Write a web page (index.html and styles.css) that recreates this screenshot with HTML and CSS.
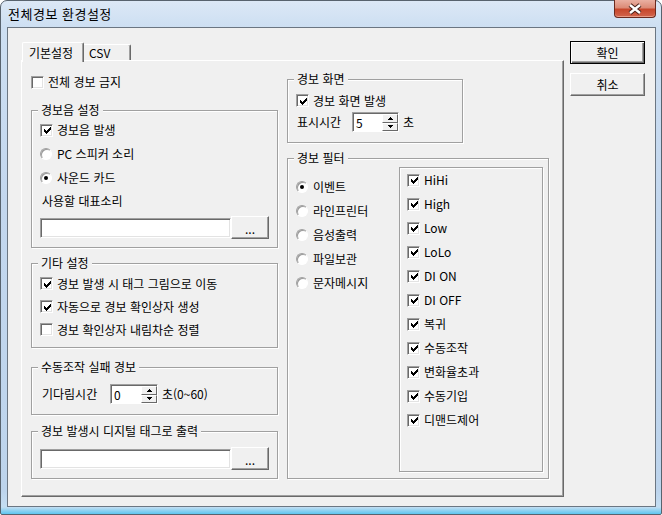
FILE: index.html
```html
<!DOCTYPE html>
<html lang="ko">
<head>
    <meta charset="UTF-8">
    <title>전체경보 환경설정</title>
    <link rel="stylesheet" href="styles.css">
</head>
<body>
    <!-- 공용 아이콘 -->
    <svg class="defs" width="0" height="0">
        <symbol id="chk" viewBox="0 0 7 7"><path d="M0 2h1v3H0zM1 3h1v3H1zM2 4h1v3H2zM3 3h1v3H3zM4 2h1v3H4zM5 1h1v3H5zM6 0h1v3H6z"/></symbol>
        <symbol id="up" viewBox="0 0 5 3"><path d="M2 0h1v1h1v1h1v1H0V2h1V1h1z"/></symbol>
        <symbol id="down" viewBox="0 0 5 3"><path d="M0 0h5v1H4v1H3v1H2V2H1V1H0z"/></symbol>
    </svg>

    <div class="window">
        <div class="titlebar">
            <span class="title">전체경보 환경설정</span>
            <div class="close">
                <svg width="16" height="12" viewBox="0 0 16 12">
                    <path d="M3 2l10 8M13 2L3 10" stroke="#4a2019" stroke-width="4.5"/>
                    <path d="M3 2l10 8M13 2L3 10" stroke="#fff" stroke-width="2.4"/>
                </svg>
            </div>
        </div>

        <div class="client">
            <div class="tabs">
                <div class="tab-strip">
                    <div class="tab active">기본설정</div>
                    <div class="tab">CSV</div>
                </div>

                <div class="tab-panel">
                    <!-- 왼쪽 -->
                    <div class="col">
                        <div class="opt top-row"><span class="check"></span>전체 경보 금지</div>

                        <div class="group g-sound">
                            <span class="group-title">경보음 설정</span>
                            <div class="opt"><span class="check"><svg><use href="#chk"/></svg></span>경보음 발생</div>
                            <div class="opt"><span class="radio"></span>PC 스피커 소리</div>
                            <div class="opt"><span class="radio on"></span>사운드 카드</div>
                            <div class="caption">사용할 대표소리</div>
                            <div class="file-row">
                                <div class="field"></div>
                                <div class="btn dots">...</div>
                            </div>
                        </div>

                        <div class="group g-etc">
                            <span class="group-title">기타 설정</span>
                            <div class="opt"><span class="check"><svg><use href="#chk"/></svg></span>경보 발생 시 태그 그림으로 이동</div>
                            <div class="opt"><span class="check"><svg><use href="#chk"/></svg></span>자동으로 경보 확인상자 생성</div>
                            <div class="opt"><span class="check"></span>경보 확인상자 내림차순 정렬</div>
                        </div>

                        <div class="group g-manual">
                            <span class="group-title">수동조작 실패 경보</span>
                            <div class="spin-row">
                                <span class="spin-label wait">기다림시간</span>
                                <div class="spin wide">
                                    <span class="spin-val">0</span>
                                    <div class="spin-btns">
                                        <span class="spin-btn"><svg><use href="#up"/></svg></span>
                                        <span class="spin-btn"><svg><use href="#down"/></svg></span>
                                    </div>
                                </div>
                                <span class="unit">초(0~60)</span>
                            </div>
                        </div>

                        <div class="group g-digital">
                            <span class="group-title">경보 발생시 디지털 태그로 출력</span>
                            <div class="file-row">
                                <div class="field"></div>
                                <div class="btn dots">...</div>
                            </div>
                        </div>
                    </div>

                    <!-- 오른쪽 -->
                    <div class="col right">
                        <div class="group g-screen">
                            <span class="group-title">경보 화면</span>
                            <div class="opt"><span class="check"><svg><use href="#chk"/></svg></span>경보 화면 발생</div>
                            <div class="spin-row short">
                                <span class="spin-label show">표시시간</span>
                                <div class="spin">
                                    <span class="spin-val">5</span>
                                    <div class="spin-btns">
                                        <span class="spin-btn"><svg><use href="#up"/></svg></span>
                                        <span class="spin-btn"><svg><use href="#down"/></svg></span>
                                    </div>
                                </div>
                                <span class="unit">초</span>
                            </div>
                        </div>

                        <div class="group g-filter">
                            <span class="group-title">경보 필터</span>
                            <div class="radios">
                                <div class="opt"><span class="radio on"></span>이벤트</div>
                                <div class="opt"><span class="radio"></span>라인프린터</div>
                                <div class="opt"><span class="radio"></span>음성출력</div>
                                <div class="opt"><span class="radio"></span>파일보관</div>
                                <div class="opt"><span class="radio"></span>문자메시지</div>
                            </div>
                            <div class="list">
                                <div class="opt"><span class="check"><svg><use href="#chk"/></svg></span>HiHi</div>
                                <div class="opt"><span class="check"><svg><use href="#chk"/></svg></span>High</div>
                                <div class="opt"><span class="check"><svg><use href="#chk"/></svg></span>Low</div>
                                <div class="opt"><span class="check"><svg><use href="#chk"/></svg></span>LoLo</div>
                                <div class="opt"><span class="check"><svg><use href="#chk"/></svg></span>DI ON</div>
                                <div class="opt"><span class="check"><svg><use href="#chk"/></svg></span>DI OFF</div>
                                <div class="opt"><span class="check"><svg><use href="#chk"/></svg></span>복귀</div>
                                <div class="opt"><span class="check"><svg><use href="#chk"/></svg></span>수동조작</div>
                                <div class="opt"><span class="check"><svg><use href="#chk"/></svg></span>변화율초과</div>
                                <div class="opt"><span class="check"><svg><use href="#chk"/></svg></span>수동기입</div>
                                <div class="opt"><span class="check"><svg><use href="#chk"/></svg></span>디맨드제어</div>
                            </div>
                        </div>
                    </div>
                </div>
            </div>

            <div class="buttons">
                <div class="btn default">확인</div>
                <div class="btn">취소</div>
            </div>
        </div>
    </div>
</body>
</html>
```

FILE: styles.css
```css
* {
    box-sizing: border-box;
}

body {
    margin: 0;
    font-family: "Noto Sans CJK KR", "Noto Sans", sans-serif;
    font-size: 12px;
    line-height: 16px;
    color: #000;
    background: #fff;
}

.defs {
    position: absolute;
}

/* 창 프레임 */
.window {
    width: 662px;
    height: 515px;
    display: flex;
    flex-direction: column;
    border: 1px solid #58636e;
    border-radius: 7px 7px 2px 2px;
    background: linear-gradient(to bottom, #dce8f6 0, #cddff2 26px, #c3d7ee 200px, #bdd4ec 490px, #c4def2 506px, #5cc6f0 513px);
}

.titlebar {
    height: 26px;
    display: flex;
    justify-content: space-between;
    align-items: flex-start;
    padding-left: 7px;
}

.title {
    font-size: 13px;
    letter-spacing: 0.5px;
    line-height: 26px;
}

.close {
    width: 42px;
    height: 18px;
    margin: -1px 5px 0 0;
    display: flex;
    align-items: center;
    justify-content: center;
    border: 1px solid #6b2a1f;
    border-top: none;
    border-radius: 0 0 4px 4px;
    background: linear-gradient(to bottom, #eab0a2 0, #dc8b77 45%, #c7472c 55%, #d2654d 100%);
    box-shadow: inset 0 -1px 0 #e89b86;
}

.client {
    flex: 1;
    margin: 0 5px 7px 6px;
    border: 1px solid #6b7682;
    background: #f0f0f0;
    display: flex;
    align-items: flex-start;
    padding: 13px 0 0 13px;
}

/* 탭 */
.tabs {
    width: 543px;
    margin-top: 1px;
}

.tab-strip {
    height: 18px;
    display: flex;
    align-items: flex-end;
}

.tab {
    height: 16px;
    width: 49px;
    margin-left: -2px;
    padding: 0 6px;
    background: #f0f0f0;
    border: 1px solid;
    border-color: #fff #696969 transparent #fff;
    border-bottom: none;
    border-radius: 2px 2px 0 0;
    box-shadow: inset -1px 0 0 #a0a0a0;
}

.tab.active {
    position: relative;
    z-index: 1;
    width: 62px;
    height: 20px;
    margin: 0 0 -2px 1px;
    padding-top: 2px;
}

.tab-panel {
    height: 437px;
    border: 1px solid;
    border-color: #fff #696969 #696969 #fff;
    box-shadow: inset -1px -1px 0 #a0a0a0;
    display: grid;
    grid-template-columns: 247px 262px;
    column-gap: 9px;
    align-items: start;
    padding-left: 9px;
}

.col {
    display: flex;
    flex-direction: column;
    padding-top: 9px;
}

.col.right {
    padding-top: 18px;
}

/* 그룹 상자 */
.group {
    position: relative;
    border: 1px solid #a0a0a0;
    box-shadow: 1px 1px 0 #fff, inset 1px 1px 0 #fff;
    padding: 0 8px;
}

.group-title {
    position: absolute;
    top: -9px;
    left: 6px;
    padding: 0 3px;
    background: #f0f0f0;
    white-space: nowrap;
}

.g-sound {
    margin-top: 16px;
    padding-top: 7px;
    padding-bottom: 8px;
}

.g-etc {
    margin-top: 15px;
    padding-top: 8px;
    padding-bottom: 6px;
}

.g-etc .opt {
    height: 23px;
}

.g-manual {
    margin-top: 19px;
    padding-top: 15px;
    padding-bottom: 9px;
}

.g-digital {
    margin-top: 16px;
    padding-top: 15px;
    padding-bottom: 8px;
}

.g-screen {
    width: 176px;
    padding-top: 9px;
    padding-bottom: 10px;
}

.g-screen .opt {
    height: 23px;
}

.g-filter {
    margin-top: 15px;
    display: flex;
    padding: 8px 5px 6px 8px;
}

/* 항목 */
.opt {
    height: 24px;
    display: flex;
    align-items: center;
    white-space: nowrap;
}

.top-row {
    height: 24px;
}

.caption {
    height: 22px;
    display: flex;
    align-items: center;
    padding-left: 2px;
}

.check {
    flex: none;
    width: 13px;
    height: 13px;
    margin-right: 4px;
    display: flex;
    align-items: center;
    justify-content: center;
    background: #fff;
    border: 1px solid;
    border-color: #a0a0a0 #fff #fff #a0a0a0;
    box-shadow: inset 1px 1px 0 #696969, inset -1px -1px 0 #e3e3e3;
}

.check svg {
    width: 7px;
    height: 7px;
    margin: 1px 0 0 1px;
    fill: #000;
}

.radio {
    flex: none;
    position: relative;
    width: 12px;
    height: 12px;
    margin-right: 5px;
    border-radius: 50%;
    background: #fff;
    border: 1px solid;
    border-color: #a0a0a0 #fff #fff #a0a0a0;
    box-shadow: inset 1px 1px 0 #9a9a9a;
}

.radio.on::after {
    content: "";
    position: absolute;
    left: 3px;
    top: 3px;
    width: 4px;
    height: 4px;
    border-radius: 50%;
    background: #000;
}

/* 입력 상자 */
.file-row {
    height: 23px;
    display: flex;
    align-items: center;
}

.g-sound .file-row {
    margin-top: 4px;
}

.field {
    width: 191px;
    height: 20px;
    background: #fff;
    border: 1px solid;
    border-color: #a0a0a0 #fff #fff #a0a0a0;
    box-shadow: inset 1px 1px 0 #696969, inset -1px -1px 0 #e3e3e3;
}

.btn {
    width: 75px;
    height: 23px;
    display: flex;
    align-items: center;
    justify-content: center;
    background: #f0f0f0;
    border: 1px solid;
    border-color: #fff #696969 #696969 #fff;
    box-shadow: inset -1px -1px 0 #a0a0a0;
}

.btn.dots {
    width: 38px;
    padding-top: 3px;
}

.btn.default {
    border: 1px solid #000;
    box-shadow: inset 1px 1px 0 #fff, inset -1px -1px 0 #696969, inset -2px -2px 0 #a0a0a0;
}

.buttons {
    margin-left: 6px;
    display: flex;
    flex-direction: column;
    gap: 9px;
}

/* 스핀 */
.spin-row {
    height: 22px;
    display: flex;
    align-items: center;
}

.spin-row.short {
    height: 20px;
}

.spin-label.wait {
    width: 70px;
    padding-left: 2px;
}

.spin-label.show {
    width: 56px;
    padding-left: 1px;
}

.spin {
    width: 47px;
    height: 20px;
    display: flex;
    background: #fff;
    border: 1px solid;
    border-color: #a0a0a0 #fff #fff #a0a0a0;
    box-shadow: inset 1px 1px 0 #696969;
    padding: 1px 0 0 1px;
}

.spin.wide {
    width: 48px;
}

.spin-val {
    flex: 1;
    padding-left: 2px;
    line-height: 17px;
}

.spin-btns {
    width: 16px;
    display: flex;
    flex-direction: column;
}

.spin-btn {
    flex: 1;
    display: flex;
    align-items: center;
    justify-content: center;
    background: #f0f0f0;
    border: 1px solid;
    border-color: #fff #696969 #696969 #fff;
}

.spin-btn svg {
    width: 5px;
    height: 3px;
    fill: #000;
}

.unit {
    margin-left: 4px;
}

/* 경보 필터 */
.radios {
    flex: 1;
    padding-top: 8px;
}

.list {
    width: 144px;
    height: 305px;
    padding-left: 7px;
    border: 1px solid #a0a0a0;
    box-shadow: 1px 1px 0 #fff, inset 1px 1px 0 #fff;
}
```
